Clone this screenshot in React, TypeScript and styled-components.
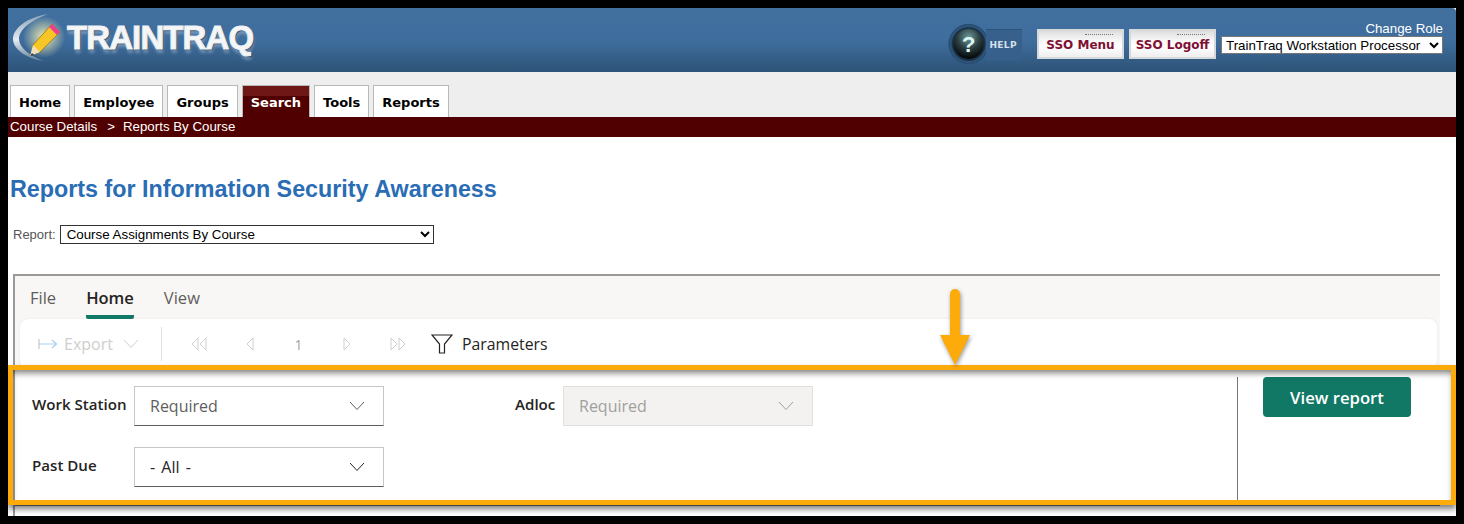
import styled, { createGlobalStyle } from "styled-components";

const GlobalStyle = createGlobalStyle`
  html, body {
    margin: 0;
    padding: 0;
    background: #000;
  }
  body {
    font-family: "Liberation Sans", Arial, sans-serif;
  }
`;

const tabs = ["Home", "Employee", "Groups", "Search", "Tools", "Reports"];

function LogoMark() {
  return (
    <svg width="54" height="52" viewBox="0 0 54 52">
      <defs>
        <radialGradient id="glow" cx="50%" cy="50%" r="50%">
          <stop offset="0%" stopColor="#fff6b0" stopOpacity="0.9" />
          <stop offset="100%" stopColor="#fff6b0" stopOpacity="0" />
        </radialGradient>
        <linearGradient id="swoosh" x1="0" y1="0" x2="0" y2="1">
          <stop offset="0%" stopColor="#8aa3ba" />
          <stop offset="55%" stopColor="#e6ebef" />
          <stop offset="100%" stopColor="#5d7f9f" />
        </linearGradient>
      </defs>
      <circle cx="32" cy="25" r="21" fill="url(#glow)" />
      <path d="M36 2 C16 5 1 16 1 27 C1 38 16 47 32 49 C18 44 7 36 7 27 C7 17 20 8 36 2 Z" fill="url(#swoosh)" />
      <path d="M40 12 L48 20 L28 40 L20 42 L21 33 Z" fill="#f6c526" stroke="#9a7a10" strokeWidth="0.8" />
      <path d="M37 15 L45 23 L48 20 L40 12 Z" fill="#eb3f8f" />
      <path d="M21 33 L28 40 L18 44 Z" fill="#f0e2b8" />
      <path d="M20 41 L18 44 L22 43 Z" fill="#333" />
    </svg>
  );
}

function HelpBadge() {
  return (
    <svg width="42" height="44" viewBox="0 0 42 44">
      <defs>
        <radialGradient id="ball" cx="50%" cy="30%" r="65%">
          <stop offset="0%" stopColor="#6f9c9e" />
          <stop offset="55%" stopColor="#2a3c3e" />
          <stop offset="100%" stopColor="#050808" />
        </radialGradient>
      </defs>
      <circle cx="22" cy="22" r="21" fill="#2c5378" stroke="#264a6c" />
      <circle cx="22" cy="22" r="17" fill="url(#ball)" stroke="#1c3146" strokeWidth="2" />
      <text x="22" y="30" textAnchor="middle" fontFamily="Liberation Sans" fontWeight="700" fontSize="24" fill="#dcf6f4">?</text>
    </svg>
  );
}

function Chevron() {
  return (
    <svg width="16" height="10" viewBox="0 0 16 10" fill="none" stroke="currentColor" strokeWidth="1">
      <path d="M1 1 L8 8.5 L15 1" />
    </svg>
  );
}

function ExportArrow() {
  return (
    <svg width="20" height="12" viewBox="0 0 20 12" fill="none" strokeWidth="1.2">
      <path d="M1 1 V11" stroke="#c8c6c4" />
      <path d="M1 6 H18 M14 2 L18.5 6 L14 10" stroke="#a9cfee" />
    </svg>
  );
}

function NavGlyph({ kind }: { kind: "first" | "prev" | "next" | "last" }) {
  const paths = {
    first: "M8 1 L2 7 L8 13 Z M16 1 L10 7 L16 13 Z",
    prev: "M11 1 L5 7 L11 13 Z",
    next: "M7 1 L13 7 L7 13 Z",
    last: "M2 1 L8 7 L2 13 Z M10 1 L16 7 L10 13 Z",
  };
  return (
    <svg width="18" height="14" viewBox="0 0 18 14" fill="none" stroke="#cfcfcf" strokeWidth="1">
      <path d={paths[kind]} />
    </svg>
  );
}

function Funnel() {
  return (
    <svg width="22" height="20" viewBox="0 0 22 20" fill="none" stroke="#252423" strokeWidth="1.2">
      <path d="M1 1 H21 L13.5 10 V19 H8.5 V10 Z" />
    </svg>
  );
}

function Arrow() {
  return (
    <svg width="30" height="76" viewBox="0 0 30 76">
      <path d="M10 5 a5 5 0 0 1 10 0 V46 H30 L15 76 L0 46 H10 Z" fill="#fdab0b" />
    </svg>
  );
}

export default function App() {
  return (
    <Page>
      <GlobalStyle />
      <Sheet>
        <Header>
          <Logo>
            <LogoMark />
            <LogoText>TRAINTRAQ</LogoText>
          </Logo>
          <HeaderRight>
            <Help>
              <HelpBadge />
              <HelpTag>HELP</HelpTag>
            </Help>
            <SsoButton>SSO Menu</SsoButton>
            <SsoButton>SSO Logoff</SsoButton>
            <RoleBox>
              <RoleLabel>Change Role</RoleLabel>
              <RoleSelect defaultValue="p">
                <option value="p">TrainTraq Workstation Processor</option>
              </RoleSelect>
            </RoleBox>
          </HeaderRight>
        </Header>

        <NavBar>
          {tabs.map((t) => (
            <Tab key={t} $active={t === "Search"}>
              {t}
            </Tab>
          ))}
        </NavBar>

        <Crumbs>
          Course Details<CrumbSep>&gt;</CrumbSep>Reports By Course
        </Crumbs>

        <Title>Reports for Information Security Awareness</Title>

        <ReportRow>
          <ReportLabel>Report:</ReportLabel>
          <ReportSelect defaultValue="a">
            <option value="a">Course Assignments By Course</option>
          </ReportSelect>
        </ReportRow>

        <Frame>
          <Ribbon>
            <RibbonTabs>
              <RibbonTab>File</RibbonTab>
              <RibbonTab $active>Home</RibbonTab>
              <RibbonTab>View</RibbonTab>
            </RibbonTabs>
            <Toolbar>
              <ExportGroup>
                <ExportArrow />
                <span>Export</span>
                <Chevron />
              </ExportGroup>
              <ToolDivider />
              <Pager>
                <NavGlyph kind="first" />
                <NavGlyph kind="prev" />
                <PageNumber>1</PageNumber>
                <NavGlyph kind="next" />
                <NavGlyph kind="last" />
              </Pager>
              <ParamsButton>
                <Funnel />
                <span>Parameters</span>
              </ParamsButton>
            </Toolbar>
          </Ribbon>

          <Params>
            <Fields>
              <FieldLabel>Work Station</FieldLabel>
              <Dropdown $placeholder>
                Required
                <Chevron />
              </Dropdown>
              <span />
              <FieldLabel>Adloc</FieldLabel>
              <Dropdown $disabled>
                Required
                <Chevron />
              </Dropdown>
              <FieldLabel>Past Due</FieldLabel>
              <Dropdown>
                - All -
                <Chevron />
              </Dropdown>
            </Fields>
            <Actions>
              <ViewButton>View report</ViewButton>
            </Actions>
          </Params>

          <Highlight />
          <ArrowMark>
            <Arrow />
          </ArrowMark>
        </Frame>
      </Sheet>
    </Page>
  );
}

const Page = styled.div`
  width: 1464px;
  height: 524px;
  box-sizing: border-box;
  padding: 8px;
  background: #000;
  overflow: hidden;
`;

const Sheet = styled.div`
  height: 508px;
  background: #fff;
  overflow: hidden;
`;

const Header = styled.header`
  height: 64px;
  display: flex;
  justify-content: space-between;
  background: linear-gradient(#41709f 0%, #3f6e9e 50%, #2d5377 100%);
  border-top-right-radius: 4px;
`;

const Logo = styled.div`
  display: flex;
  align-items: center;
  padding-left: 4px;
  gap: 1px;
  height: 60px;
`;

const LogoText = styled.span`
  font-family: "Liberation Sans", Arial, sans-serif;
  font-weight: 700;
  font-size: 33px;
  letter-spacing: -0.9px;
  color: #f4f6f8;
  -webkit-text-stroke: 1px #eef1f4;
  text-shadow: 1px 1px 1px #22384e, 1px 4px 3px rgba(220, 230, 240, 0.35);
`;

const HeaderRight = styled.div`
  display: flex;
  align-items: flex-start;
  padding-right: 13px;
`;

const Help = styled.div`
  display: flex;
  align-items: center;
  margin: 14px 15px 0 0;
  width: 74px;
`;

const HelpTag = styled.span`
  display: flex;
  align-items: center;
  height: 30px;
  padding: 0 5px 0 3px;
  margin-left: -1px;
  flex: 1;
  background: #37618c;
  border-top: 1px solid #2c5378;
  color: #d5e0ea;
  font-family: "DejaVu Sans", sans-serif;
  font-weight: 700;
  font-size: 9px;
  letter-spacing: 0.4px;
`;

const SsoButton = styled.div`
  position: relative;
  box-sizing: border-box;
  width: 87px;
  height: 30px;
  margin: 21px 5px 0 0;
  padding-top: 2px;
  display: flex;
  align-items: center;
  justify-content: center;
  background: linear-gradient(#dedede 0%, #f6f6f6 35%, #fff 60%, #eeeeee 100%);
  border: 2px solid #d5d9dc;
  color: #7f0f33;
  font-family: "DejaVu Sans", sans-serif;
  font-weight: 700;
  font-size: 12px;
  white-space: nowrap;

  &::before {
    content: "";
    position: absolute;
    top: 3px;
    right: 9px;
    width: 28px;
    border-top: 1px dotted #777;
  }
`;

const RoleBox = styled.div`
  width: 222px;
  margin-top: 13px;
  display: flex;
  flex-direction: column;
  align-items: flex-end;
`;

const RoleLabel = styled.span`
  color: #fff;
  font-size: 13.3px;
  line-height: 15px;
`;

const RoleSelect = styled.select`
  width: 222px;
  height: 18px;
  padding: 0;
  border: 1px solid #777;
  border-radius: 0;
  background: #fff;
  color: #000;
  font-family: "Liberation Sans", Arial, sans-serif;
  font-size: 13.33px;
`;

const NavBar = styled.nav`
  height: 45px;
  box-sizing: border-box;
  display: flex;
  align-items: flex-end;
  gap: 4px;
  padding-left: 2px;
  background: #eeeeee;
`;

const Tab = styled.div<{ $active?: boolean }>`
  box-sizing: border-box;
  height: 32px;
  padding: 1px 8px 0;
  display: flex;
  align-items: center;
  border: 1px solid #b9b9b9;
  border-bottom: 0;
  background: ${(p) => (p.$active ? "linear-gradient(#6f1717 0 10px, #500000 10px)" : "#fff")};
  color: ${(p) => (p.$active ? "#fff" : "#000")};
  font-family: "DejaVu Sans", sans-serif;
  font-weight: 700;
  font-size: 13px;
`;

const Crumbs = styled.div`
  height: 20px;
  box-sizing: border-box;
  padding-left: 2px;
  background: #500000;
  color: #fff;
  font-size: 13.3px;
  line-height: 20px;
`;

const CrumbSep = styled.span`
  margin: 0 8px 0 10px;
`;

const Title = styled.h1`
  margin: 39px 0 0 2px;
  color: #2a6db5;
  font-size: 23.3px;
  line-height: 26px;
  font-weight: 700;
`;

const ReportRow = styled.div`
  display: flex;
  align-items: center;
  margin-top: 23px;
  padding-left: 5px;
  gap: 4px;
`;

const ReportLabel = styled.span`
  color: #555;
  font-size: 13px;
`;

const ReportSelect = styled.select`
  width: 374px;
  height: 19px;
  padding: 0 0 0 2px;
  border: 1px solid #333;
  border-radius: 0;
  background: #fff;
  color: #000;
  font-family: "Liberation Sans", Arial, sans-serif;
  font-size: 13.33px;
`;

const Frame = styled.section`
  position: relative;
  margin: 30px 16px 0 5px;
  height: 242px;
  border-top: 2px solid #999;
  border-left: 2px solid #999;
  font-family: "Open Sans", sans-serif;
`;

const Ribbon = styled.div`
  height: 94px;
  background: #f9f7f5;
`;

const RibbonTabs = styled.div`
  height: 43px;
  display: flex;
  gap: 30px;
  padding-left: 15px;
`;

const RibbonTab = styled.div<{ $active?: boolean }>`
  height: 43px;
  box-sizing: border-box;
  padding-top: 10px;
  color: ${(p) => (p.$active ? "#252423" : "#605e5c")};
  font-size: 16.5px;
  line-height: 24px;
  font-weight: ${(p) => (p.$active ? 600 : 400)};
  border-bottom: 4px solid ${(p) => (p.$active ? "#117865" : "transparent")};
  border-radius: 0 0 2px 2px;
`;

const Toolbar = styled.div`
  height: 50px;
  margin: 0 3px 0 5px;
  display: flex;
  align-items: center;
  background: #fff;
  border-radius: 8px;
  box-shadow: 0 0 2px rgba(0, 0, 0, 0.1);
`;

const ExportGroup = styled.div`
  width: 141px;
  box-sizing: border-box;
  padding-left: 18px;
  display: flex;
  align-items: center;
  gap: 6px;
  color: #d0cecc;
  font-size: 16px;

  svg:last-child {
    margin-left: 4px;
  }
`;

const ToolDivider = styled.div`
  width: 1px;
  height: 34px;
  background: #e1dfdd;
`;

const Pager = styled.div`
  width: 269px;
  box-sizing: border-box;
  padding: 0 24px 0 28px;
  display: flex;
  align-items: center;
  justify-content: space-between;
`;

const PageNumber = styled.span`
  color: #a8a298;
  font-size: 14px;
`;

const ParamsButton = styled.div`
  display: flex;
  align-items: center;
  gap: 9px;
  color: #252423;
  font-size: 15.8px;
`;

const Params = styled.div`
  position: relative;
  display: flex;
  height: 136px;
  box-sizing: border-box;
  background: #fff;
  border-bottom: 1px solid #777;
`;

const Fields = styled.div`
  width: 1223px;
  box-sizing: border-box;
  padding: 9px 0 0 17px;
  margin-top: 7px;
  display: grid;
  grid-template-columns: 102px 250px 131px 48px 250px;
  grid-template-rows: 40px 40px;
  row-gap: 21px;
  align-content: start;
  border-right: 1px solid #777;
`;

const FieldLabel = styled.label`
  color: #252423;
  font-size: 15.1px;
  font-weight: 600;
  line-height: 37px;
`;

const Dropdown = styled.div<{ $placeholder?: boolean; $disabled?: boolean }>`
  box-sizing: border-box;
  height: 40px;
  padding: 0 18px 0 15px;
  display: flex;
  align-items: center;
  justify-content: space-between;
  border: 1px solid ${(p) => (p.$disabled ? "#e1dfdd" : "#c8c6c4")};
  border-bottom-color: ${(p) => (p.$disabled ? "#e1dfdd" : "#605e5c")};
  background: ${(p) => (p.$disabled ? "#f3f2f1" : "#fff")};
  color: ${(p) => (p.$disabled ? "#a19f9d" : p.$placeholder ? "#605e5c" : "#252423")};
  font-size: 16px;
  word-spacing: 2px;
`;

const Actions = styled.div`
  padding: 7px 0 0 25px;
`;

const ViewButton = styled.button`
  width: 148px;
  height: 40px;
  padding: 0;
  border: 0;
  border-radius: 4px;
  background: #117865;
  color: #fff;
  font-family: "Open Sans", sans-serif;
  font-size: 16.7px;
  font-weight: 600;
`;

const Highlight = styled.div`
  position: absolute;
  left: -7px;
  top: 89px;
  width: 1448px;
  height: 140px;
  box-sizing: border-box;
  border: 5px solid #fdab0b;
  box-shadow: 0 4px 6px rgba(0, 0, 0, 0.5), inset 0 5px 6px -2px rgba(0, 0, 0, 0.5);
  pointer-events: none;
`;

const ArrowMark = styled.div`
  position: absolute;
  left: 925px;
  top: 13px;
  line-height: 0;
  filter: drop-shadow(1px 2px 2px rgba(0, 0, 0, 0.4));
`;
